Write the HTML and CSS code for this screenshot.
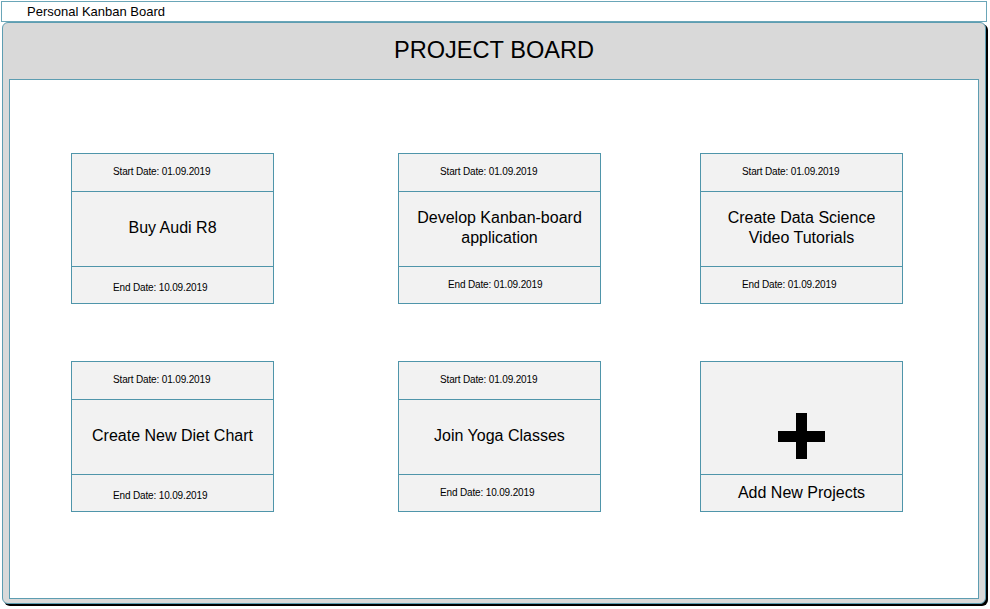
FILE: index.html
```html
<!DOCTYPE html>
<html lang="en">
<head>
<meta charset="utf-8">
<title>Personal Kanban Board</title>
<link rel="stylesheet" href="styles.css">
</head>
<body>
<div class="topbar">Personal Kanban Board</div>
<div class="panel">
  <div class="panel-header">PROJECT BOARD</div>
  <div class="board">
    <div class="card">
      <div class="card-date">Start Date: 01.09.2019</div>
      <div class="card-title">Buy Audi R8</div>
      <div class="card-date card-date--low">End Date: 10.09.2019</div>
    </div>
    <div class="card">
      <div class="card-date">Start Date: 01.09.2019</div>
      <div class="card-title">Develop Kanban-board<br>application</div>
      <div class="card-date card-date--shift">End Date: 01.09.2019</div>
    </div>
    <div class="card">
      <div class="card-date">Start Date: 01.09.2019</div>
      <div class="card-title">Create Data Science<br>Video Tutorials</div>
      <div class="card-date">End Date: 01.09.2019</div>
    </div>
    <div class="card">
      <div class="card-date">Start Date: 01.09.2019</div>
      <div class="card-title">Create New Diet Chart</div>
      <div class="card-date card-date--low">End Date: 10.09.2019</div>
    </div>
    <div class="card">
      <div class="card-date">Start Date: 01.09.2019</div>
      <div class="card-title">Join Yoga Classes</div>
      <div class="card-date">End Date: 10.09.2019</div>
    </div>
    <div class="card card--add">
      <div class="add-icon">
        <svg width="47" height="46" viewBox="0 0 47 46" aria-hidden="true">
          <rect x="18" y="0" width="11" height="46" fill="#000"/>
          <rect x="0" y="18" width="47" height="11" fill="#000"/>
        </svg>
      </div>
      <div class="add-label">Add New Projects</div>
    </div>
  </div>
</div>
</body>
</html>
```

FILE: styles.css
```css
* {
  box-sizing: border-box;
}

html, body {
  margin: 0;
  padding: 0;
  background: #ffffff;
}

body {
  width: 990px;
  height: 609px;
  overflow: hidden;
  font-family: "Liberation Sans", Arial, sans-serif;
  color: #000;
}

.topbar {
  margin: 1px 0 0 1px;
  width: 986px;
  height: 21px;
  border: 1px solid #6aa6b8;
  padding-left: 25px;
  font-size: 13px;
  line-height: 19px;
}

.panel {
  margin: 0 0 0 2px;
  width: 984px;
  height: 582px;
  background: #d9d9d9;
  border: 1px solid #5d9db1;
  border-radius: 6px;
  box-shadow: 2px 2px 0 #000;
  padding: 0 6px 4px 6px;
  display: flex;
  flex-direction: column;
}

.panel-header {
  height: 56px;
  display: flex;
  align-items: center;
  justify-content: center;
  font-size: 23.6px;
  padding-bottom: 2px;
}

.board {
  flex: 1;
  background: #ffffff;
  border: 1px solid #5d9db1;
  padding: 73px 0 0 61px;
  display: grid;
  grid-template-columns: 327px 302px 203px;
  grid-auto-rows: 151px;
  row-gap: 57px;
  align-content: start;
}

.card {
  width: 203px;
  height: 151px;
  background: #f2f2f2;
  border: 1px solid #4f95aa;
  display: flex;
  flex-direction: column;
}

.card-date {
  height: 37px;
  display: flex;
  align-items: center;
  padding-left: 41px;
  padding-bottom: 2px;
  font-size: 10px;
  letter-spacing: -0.15px;
}

.card-date:last-child {
  height: 36px;
  padding-bottom: 2px;
}

.card-date.card-date--low {
  padding-top: 4px;
  padding-bottom: 0;
}

.card-date.card-date--shift {
  padding-left: 49px;
}

.card-title {
  flex: 1;
  border-top: 1px solid #4f95aa;
  border-bottom: 1px solid #4f95aa;
  display: flex;
  align-items: center;
  justify-content: center;
  text-align: center;
  font-size: 16px;
  line-height: 20px;
  padding-bottom: 2px;
}

.card--add .add-icon {
  height: 113px;
  border-bottom: 1px solid #4f95aa;
  display: flex;
  justify-content: center;
  align-items: center;
  padding-top: 36px;
}

.card--add .add-label {
  flex: 1;
  display: flex;
  align-items: center;
  justify-content: center;
  font-size: 16px;
}
```
